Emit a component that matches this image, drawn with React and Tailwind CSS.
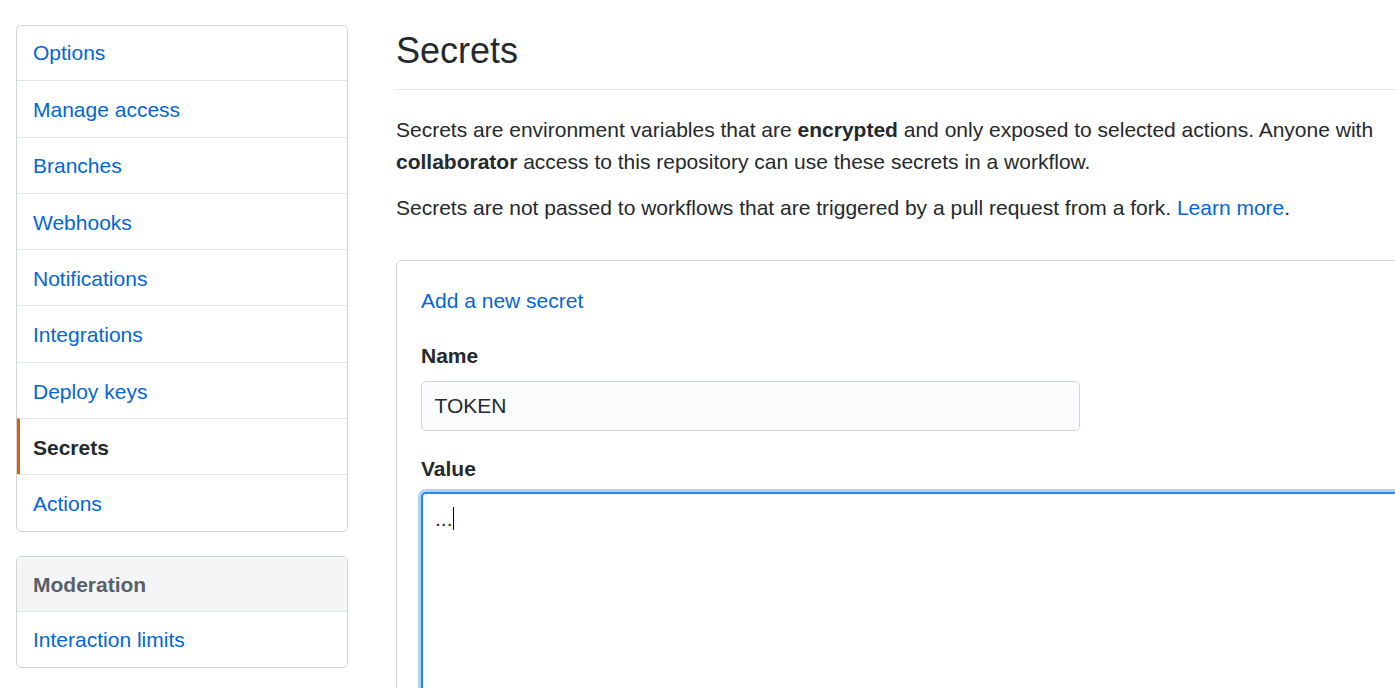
import React from 'react';

const navItems = [
  'Options',
  'Manage access',
  'Branches',
  'Webhooks',
  'Notifications',
  'Integrations',
  'Deploy keys',
  'Secrets',
  'Actions',
];

function SideNav() {
  return (
    <div className="w-[332px] shrink-0 pt-[24.5px] pl-[16px] box-content">
      {/* Settings menu */}
      <div className="border-[1.5px] border-[#d1d5da] rounded-[5px] bg-white overflow-hidden">
        {navItems.map((item, i) => {
          const selected = item === 'Secrets';
          return (
            <div
              key={item}
              className={
                (i === 0 ? 'h-[54.8px] ' : 'h-[56.3px] pt-[2px] border-t-[1.5px] border-[#e1e4e8] ') +
                'flex items-center ' +
                (selected
                  ? 'border-l-[3px] border-l-[#e36209] pl-[13px] font-bold text-[#24292e]'
                  : 'pl-[16px] text-[#0366d6]')
              }
            >
              {item}
            </div>
          );
        })}
      </div>

      {/* Moderation menu */}
      <div className="mt-[24px] border-[1.5px] border-[#d1d5da] rounded-[5px] bg-white overflow-hidden">
        <div className="h-[54px] pt-[2px] flex items-center pl-[16px] bg-[#f4f5f7] font-bold text-[#586069]">
          Moderation
        </div>
        <div className="h-[56px] pt-[2px] flex items-center pl-[16px] border-t-[1.5px] border-[#e1e4e8] text-[#0366d6]">
          Interaction limits
        </div>
      </div>
    </div>
  );
}

function SecretsPanel() {
  return (
    <div className="w-[1050px] shrink-0 ml-[48px] pt-[28px]">
      {/* Page header */}
      <div className="border-b-[1.5px] border-[#e1e4e8] pb-[16px]">
        <h2 className="text-[36px] leading-[45px] font-normal text-[#24292e]">Secrets</h2>
      </div>

      <p className="mt-[24px]">
        Secrets are environment variables that are <strong>encrypted</strong> and only exposed to selected actions. Anyone with <strong>collaborator</strong> access to this repository can use these secrets in a workflow.
      </p>
      <p className="mt-[15px]">
        Secrets are not passed to workflows that are triggered by a pull request from a fork. <a className="text-[#0366d6]">Learn more</a>.
      </p>

      {/* Form box */}
      <div className="mt-[36px] border-[1.5px] border-[#d1d5da] rounded-[5px] p-[24px] pb-[60px]">
        <div className="text-[#0366d6]">Add a new secret</div>

        <div className="mt-[24px] font-bold">Name</div>
        <div className="mt-[9px] w-[659px] h-[50px] flex items-center px-[12.5px] bg-[#fafbfc] border-[1.5px] border-[#d1d5da] rounded-[5px]">
          TOKEN
        </div>

        <div className="mt-[22px] font-bold">Value</div>
        <div className="mt-[8px] h-[260px] border-2 border-[#2188ff] rounded-[5px] bg-white shadow-[0_0_0_3px_rgba(3,102,214,0.3)] px-[12px] pt-[9px]">
          <div className="flex items-center h-[31.5px]">
            <span>...</span>
            <span className="inline-block w-px h-[23px] bg-black"></span>
          </div>
        </div>
      </div>
    </div>
  );
}

export default function App() {
  return (
    <div className="w-[1395px] h-[688px] overflow-hidden bg-white flex text-[21px] leading-[31.5px] text-[#24292e] font-['Liberation_Sans',Arial,sans-serif]">
      <SideNav />
      <SecretsPanel />
    </div>
  );
}
